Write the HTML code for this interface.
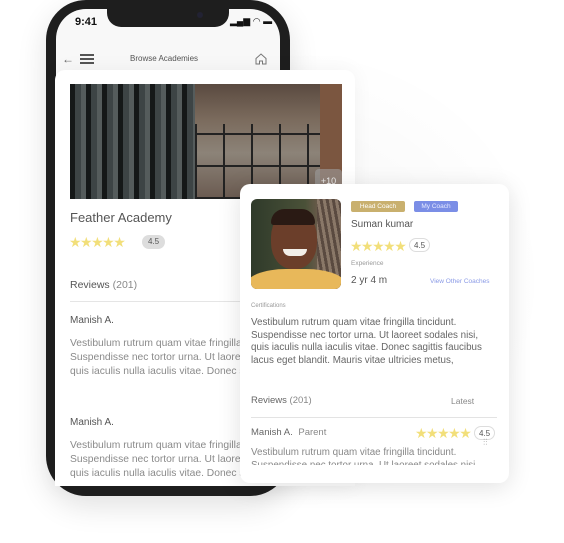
<!DOCTYPE html>
<html><head><meta charset="utf-8"><style>
*{margin:0;padding:0;box-sizing:border-box}
body{width:564px;height:543px;background:#fff;position:relative;overflow:hidden;font-family:"Liberation Sans",sans-serif;color:#555}
.abs{position:absolute}
.phone{left:46px;top:0;width:244px;height:496px;background:#1e1e1e;border-radius:40px;box-shadow:0 10px 30px rgba(0,0,0,.12)}
.screen{left:56px;top:9px;width:224px;height:477px;background:#f8f8f8;border-radius:30px;overflow:hidden}
.notch{left:107px;top:0;width:122px;height:27px;background:#1e1e1e;border-radius:0 0 14px 14px}
.card1{left:55px;top:70px;width:300px;height:416px;background:#fff;border-radius:10px 10px 0 0;overflow:hidden;box-shadow:0 0 20px rgba(0,0,0,.05)}
.card2{left:240px;top:184px;width:269px;height:299px;background:#fff;border-radius:10px;box-shadow:0 4px 24px rgba(0,0,0,.12)}
.t{position:absolute;white-space:nowrap}
.star{color:#f2df7a;font-size:14px;letter-spacing:-1.5px}
.para{font-size:10.3px;line-height:14px;color:#8a8a8a}
.pill{border:1px solid #ddd;border-radius:9px;font-size:8px;text-align:center;line-height:13px;color:#555;background:#fff}
</style></head><body>
<div class="abs" style="left:30px;top:40px;width:520px;height:480px;background:radial-gradient(ellipse at center,rgba(0,0,0,.04),rgba(0,0,0,0) 70%)"></div>
<div class="abs phone"></div>
<div class="abs screen"></div>
<div class="abs notch"></div>
<div class="abs" style="left:197px;top:12px;width:6px;height:6px;border-radius:50%;background:#223"></div>
<div class="t" style="left:75px;top:16px;font-size:11px;font-weight:bold;color:#111">9:41</div>
<div class="t" style="left:230px;top:16px;font-size:9px;color:#111">▂▄▆ ◠ ▬</div>
<div class="t" style="left:62px;top:52px;font-size:12px;color:#666">←</div>
<div class="abs" style="left:80px;top:54px;width:14px;height:1.5px;background:#555;box-shadow:0 4px 0 #555,0 8px 0 #555"></div>
<div class="t" style="left:130px;top:54px;font-size:8px;color:#555">Browse Academies</div>
<svg class="abs" style="left:254px;top:52px" width="14" height="14" viewBox="0 0 14 14"><path d="M2 6.5L7 2l5 4.5V12H8.5V9h-3v3H2z" fill="none" stroke="#777" stroke-width="1"/></svg>

<div class="abs card1">
 <div class="abs" style="left:15px;top:14px;width:272px;height:115px;background:#333;overflow:hidden">
  <div class="abs" style="left:0;top:0;width:125px;height:115px;background:repeating-linear-gradient(90deg,#151818 0 5px,#3d4445 5px 11px,#555c5c 11px 16px);"></div>
  <div class="abs" style="left:125px;top:0;width:147px;height:115px;background:linear-gradient(#5a4a40,#7a6a5c 30%,#8c8378 60%,#6a5a50)"></div>
  <div class="abs" style="left:125px;top:40px;width:147px;height:75px;background:repeating-linear-gradient(90deg,#222 0 2px,transparent 2px 28px),repeating-linear-gradient(0deg,#222 0 2px,transparent 2px 32px)"></div>
  <div class="abs" style="left:250px;top:0;width:22px;height:115px;background:#7b5640"></div>
  <div class="abs" style="left:245px;top:85px;width:27px;height:30px;background:rgba(160,160,160,.6);border-radius:4px;color:#eee;font-size:9px;text-align:center;line-height:24px">+10</div>
 </div>
 <div class="t" style="left:15px;top:140px;font-size:13px;color:#555">Feather Academy</div>
 <div class="t star" style="left:14px;top:164px">★★★★★</div>
 <div class="t" style="left:87px;top:165px;width:23px;height:14px;border-radius:7px;background:#ddd;font-size:8px;text-align:center;line-height:14px">4.5</div>
 <div class="t" style="left:15px;top:209px;font-size:10.5px;color:#555">Reviews <span style="color:#888">(201)</span></div>
 <div class="abs" style="left:15px;top:231px;width:270px;height:1px;background:#e5e5e5"></div>
 <div class="t" style="left:15px;top:245px;font-size:10px;color:#555">Manish A.</div>
 <div class="t para" style="left:15px;top:267px">Vestibulum rutrum quam vitae fringilla tincidunt.<br>Suspendisse nec tortor urna. Ut laoreet sodales nisi,<br>quis iaculis nulla iaculis vitae. Donec sagittis</div>
 <div class="t" style="left:15px;top:347px;font-size:10px;color:#555">Manish A.</div>
 <div class="t para" style="left:15px;top:369px">Vestibulum rutrum quam vitae fringilla tincidunt.<br>Suspendisse nec tortor urna. Ut laoreet sodales nisi,<br>quis iaculis nulla iaculis vitae. Donec sagittis</div>
</div>

<div class="abs card2">
 <div class="abs" style="left:11px;top:15px;width:90px;height:90px;border-radius:6px;overflow:hidden;background:linear-gradient(90deg,#2f3a2a,#4a5138 60%,#6a5a4a 75%,#3a302a)">
  <div class="abs" style="left:66px;top:0;width:24px;height:90px;background:repeating-linear-gradient(80deg,#5a4a40 0 3px,#8a7868 3px 6px)"></div>
  <div class="abs" style="left:20px;top:12px;width:46px;height:58px;border-radius:45%;background:#6b3e2a"></div>
  <div class="abs" style="left:20px;top:10px;width:44px;height:16px;border-radius:20px 20px 4px 4px;background:#2a1a14"></div>
  <div class="abs" style="left:32px;top:50px;width:24px;height:7px;border-radius:0 0 10px 10px;background:#f2eee8"></div>
  <div class="abs" style="left:-5px;top:70px;width:100px;height:40px;border-radius:40% 40% 0 0;background:#e8b85a"></div>
 </div>
 <div class="t" style="left:111px;top:17px;width:54px;height:11px;background:#c9b06e;border-radius:2px;color:#fff;font-size:6.5px;text-align:center;line-height:11px">Head Coach</div>
 <div class="t" style="left:174px;top:17px;width:44px;height:11px;background:#7b8ee6;border-radius:2px;color:#e6eaff;font-size:6.5px;text-align:center;line-height:11px">My Coach</div>
 <div class="t" style="left:111px;top:35px;font-size:10px;color:#555">Suman kumar</div>
 <div class="t star" style="left:110px;top:54px">★★★★★</div>
 <div class="t pill" style="left:169px;top:54px;width:21px;height:14px">4.5</div>
 <div class="t" style="left:111px;top:76px;font-size:6.5px;color:#999">Experience</div>
 <div class="t" style="left:111px;top:91px;font-size:10px;color:#555">2 yr 4 m</div>
 <div class="t" style="left:190px;top:94px;font-size:6.5px;color:#8a9ae6">View Other Coaches</div>
 <div class="t" style="left:11px;top:119px;font-size:6px;color:#999">Certifications</div>
 <div class="t" style="left:11px;top:133px;font-size:9.8px;line-height:12.5px;color:#666">Vestibulum rutrum quam vitae fringilla tincidunt.<br>Suspendisse nec tortor urna. Ut laoreet sodales nisi,<br>quis iaculis nulla iaculis vitae. Donec sagittis faucibus<br>lacus eget blandit. Mauris vitae ultricies metus,</div>
 <div class="t" style="left:11px;top:211px;font-size:9.5px;color:#666">Reviews <span style="color:#888">(201)</span></div>
 <div class="t" style="left:211px;top:212px;font-size:8.5px;color:#888">Latest</div>
 <div class="abs" style="left:11px;top:233px;width:246px;height:1px;background:#e3e3e3"></div>
 <div class="t" style="left:11px;top:243px;font-size:9.5px;color:#666">Manish A. <span style="color:#888;margin-left:3px">Parent</span></div>
 <div class="t star" style="left:175px;top:241px">★★★★★</div>
 <div class="t pill" style="left:234px;top:242px;width:21px;height:14px">4.5</div>
 <div class="t" style="left:243px;top:253px;font-size:9px;color:#888">⫶⫶</div>
 <div class="abs" style="left:11px;top:263px;width:246px;height:18px;overflow:hidden"><div class="t" style="left:0;top:0;font-size:9.8px;line-height:12.5px;color:#888">Vestibulum rutrum quam vitae fringilla tincidunt.<br>Suspendisse nec tortor urna. Ut laoreet sodales nisi,</div></div>
</div>
</body></html>
